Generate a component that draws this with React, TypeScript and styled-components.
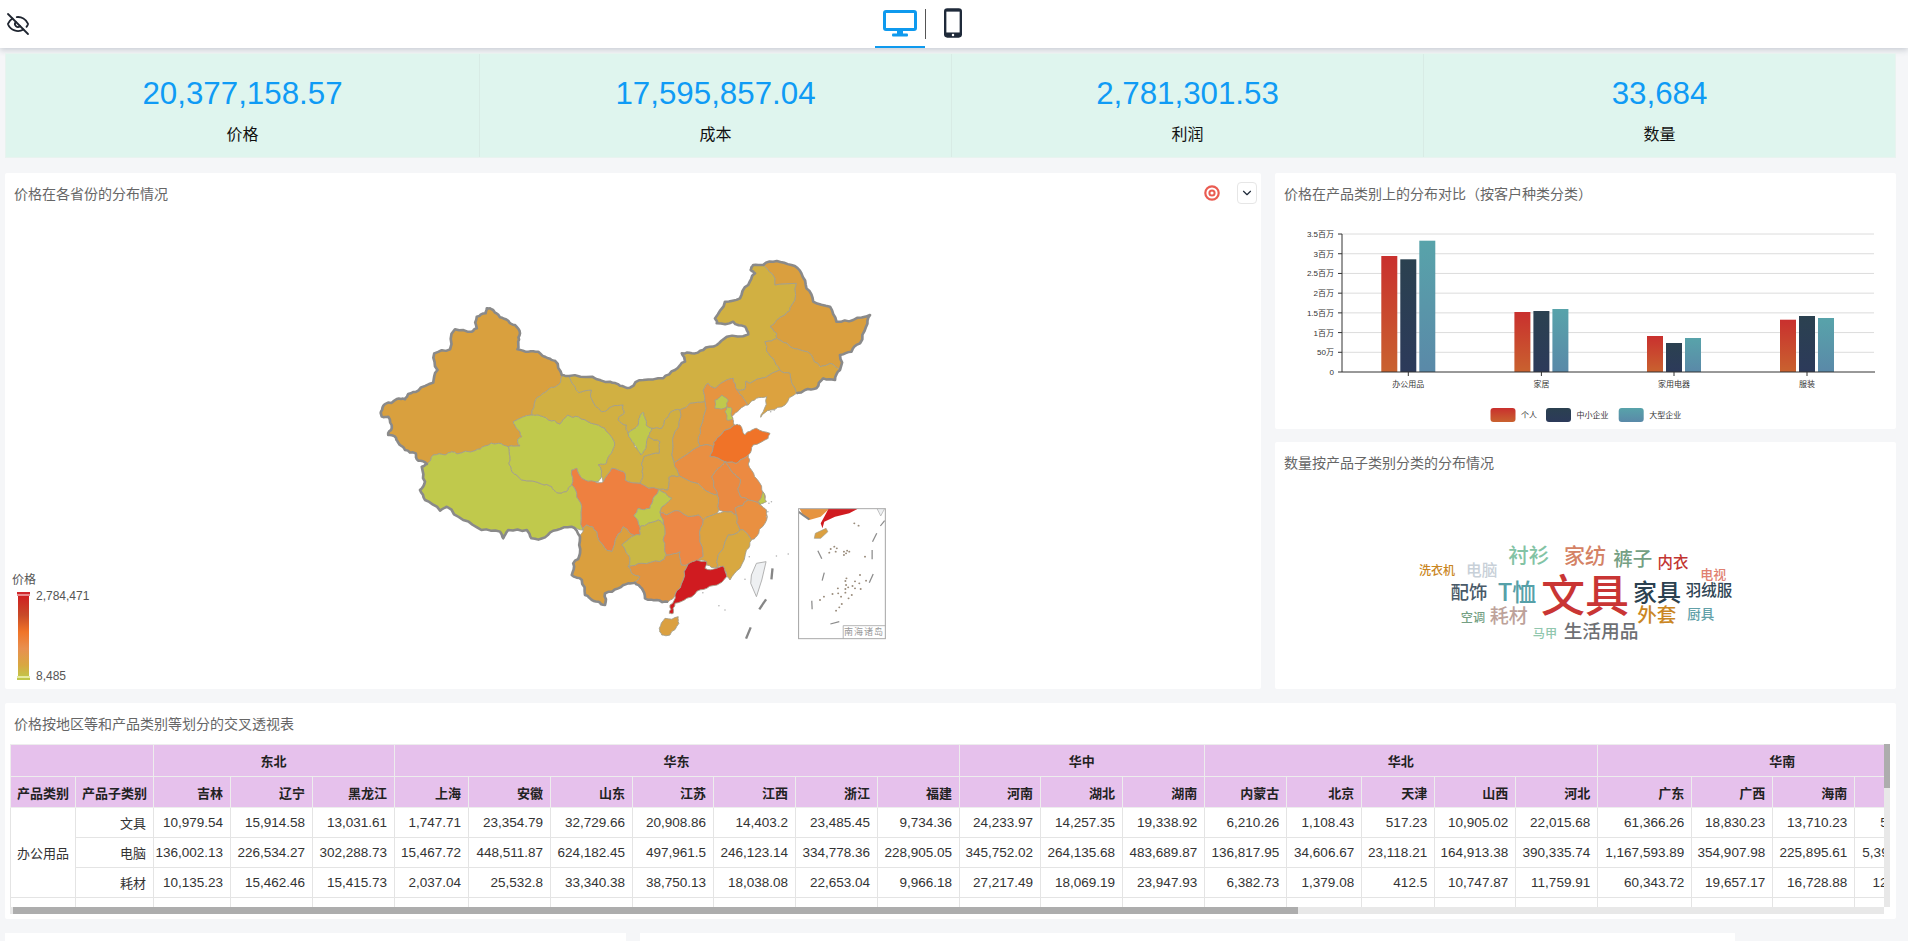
import React from 'react';
import styled, { createGlobalStyle } from 'styled-components';
import { ChevronDown, EyeOff } from 'lucide-react';

const FONT = `"Liberation Sans", "Noto Sans CJK SC", sans-serif`;

const GlobalStyle = createGlobalStyle`
  html, body {
    margin: 0;
    padding: 0;
    background: #f5f6f8;
    font-family: ${FONT};
  }
`;

const Page = styled.div`
  height: 941px;
  overflow: hidden;
  display: flex;
  flex-direction: column;
`;

const Header = styled.header`
  height: 48px;
  flex: none;
  background: #fff;
  box-shadow: 0 2px 6px rgba(60, 70, 90, 0.24);
  display: grid;
  grid-template-columns: 875px 50px 1px 50px;
  align-items: center;
`;

const EyeSlot = styled.div`
  padding-left: 6px;
  display: flex;
  color: #1f2530;
`;

const DeviceTab = styled.div<{ $active?: boolean }>`
  height: 48px;
  box-sizing: border-box;
  padding: ${props => (props.$active ? '0' : '0 0 0 4px')};
  display: flex;
  align-items: center;
  justify-content: center;
  border-bottom: 2px solid ${props => (props.$active ? '#0f9aee' : 'transparent')};
`;

const TabDivider = styled.div`
  width: 1px;
  height: 30px;
  background: #555;
`;

const Content = styled.main`
  padding: 5px 12px 0 5px;
  display: flex;
  flex-direction: column;
  gap: 14px;
`;

const KpiPanel = styled.section`
  height: 105px;
  display: grid;
  grid-template-columns: 473px repeat(3, 1fr);
  background: #dff5ee;
  border: 1px solid #e8f3ef;
  box-sizing: border-box;
  margin-bottom: 1px;
`;

const KpiCell = styled.div`
  display: flex;
  flex-direction: column;
  align-items: center;
  padding-top: 20px;
  border-left: 1px solid #d8ebe5;
  &:first-child {
    border-left: 0;
  }
`;

const KpiValue = styled.div`
  font-size: 31.3px;
  line-height: 40px;
  color: #0f9bf5;
`;

const KpiLabel = styled.div`
  margin-top: 10px;
  font-size: 16px;
  line-height: 22px;
  color: #111;
`;

const ChartsRow = styled.section`
  display: grid;
  grid-template-columns: 1256px 621px;
  column-gap: 14px;
`;

const Card = styled.div`
  background: #fff;
  border-radius: 2px;
  display: flex;
  flex-direction: column;
  position: relative;
`;

const RightColumn = styled.div`
  display: grid;
  grid-template-rows: 256px 247px;
  row-gap: 13px;
`;

const CardHead = styled.div`
  height: 40px;
  flex: none;
  box-sizing: border-box;
  padding: 0 4px 0 9px;
  display: flex;
  align-items: center;
  justify-content: space-between;
`;

const CardTitle = styled.div`
  font-size: 14px;
  color: #666;
  white-space: nowrap;
`;

const CardTools = styled.div`
  display: flex;
  align-items: center;
  gap: 17px;
`;

const DropButton = styled.div`
  width: 20px;
  height: 22px;
  box-sizing: border-box;
  border: 1px solid #e6e6e6;
  border-radius: 4px;
  display: flex;
  align-items: center;
  justify-content: center;
  color: #1f2a3a;
`;

const MapCanvas = styled.div`
  height: 476px;
  position: relative;
`;

const FullSvg = styled.svg`
  display: block;
  width: 100%;
  height: 100%;
`;

const Legend = styled.div`
  position: absolute;
  left: 7px;
  bottom: 6px;
  display: flex;
  flex-direction: column;
  color: #555;
`;

const LegendName = styled.div`
  font-size: 12px;
  line-height: 14px;
  margin-bottom: 7px;
`;

const LegendBody = styled.div`
  display: flex;
  gap: 7px;
  padding-left: 6px;
`;

const LegendBar = styled.div`
  width: 11px;
  height: 84px;
  position: relative;
  background: linear-gradient(#d01b20 0%, #c84a28 25%, #f07428 45%, #e89050 65%, #d8a840 85%, #c0c84a 100%);
  &::before,
  &::after {
    content: '';
    position: absolute;
    left: -1px;
    right: -1px;
    height: 4px;
  }
  &::before {
    top: -2px;
    background: linear-gradient(#d0282c 50%, #e88a8c 50%);
  }
  &::after {
    bottom: -2px;
    background: linear-gradient(#e6eaa0 40%, #c0c84a 40%);
  }
`;

const LegendScale = styled.div`
  height: 94px;
  margin-top: -5px;
  display: flex;
  flex-direction: column;
  justify-content: space-between;
  font-size: 12px;
  line-height: 14px;
`;

const ChartBox = styled.div`
  flex: 1;
  min-height: 0;
`;

const CloudCanvas = styled.div`
  flex: 1;
  position: relative;
`;

const CloudWord = styled.span<{ $x: number; $y: number; $size: number; $color: string }>`
  position: absolute;
  left: ${props => props.$x - 1275}px;
  top: ${props => props.$y - 482}px;
  transform: translate(-50%, -50%);
  font-family: "Noto Sans CJK SC", "Liberation Sans", sans-serif;
  font-size: ${props => props.$size}px;
  font-weight: 500;
  line-height: 1;
  color: ${props => props.$color};
  white-space: nowrap;
`;

const TableCard = styled(Card)`
  height: 216px;
`;

const PivotFrame = styled.div`
  margin-left: 5px;
  width: 1880px;
  display: grid;
  grid-template-columns: 1874px 6px;
  grid-template-rows: 163px 7px;
  margin-top: 1px;
`;

const PivotViewport = styled.div`
  overflow: hidden;
`;

const Pivot = styled.table`
  border-collapse: collapse;
  table-layout: fixed;
  width: 1957px;
  font-size: 13.5px;
  color: #333;
`;

const HeadCell = styled.th<{ $align?: string; $frozen?: boolean; $tail?: boolean }>`
  background: #e6c1ec;
  border: 1px solid #ededed;
  font-size: 13px;
  font-weight: 700;
  color: #222;
  padding: 0 ${props => (props.$tail ? '51px' : '7px')} 0 6px;
  text-align: ${props => props.$align || 'right'};
  white-space: nowrap;
  box-shadow: ${props => (props.$frozen ? '2px 0 3px rgba(0,0,0,0.1)' : 'none')};
  position: relative;
`;

const BodyCell = styled.td<{ $align?: string; $frozen?: boolean; $tail?: boolean }>`
  background: #fff;
  border: 1px solid #e4e4e4;
  padding: 0 ${props => (props.$tail ? '27px' : '7px')} 0 0;
  text-align: ${props => props.$align || 'right'};
  white-space: nowrap;
  box-shadow: ${props => (props.$frozen ? '2px 0 3px rgba(0,0,0,0.1)' : 'none')};
  position: relative;
`;

const CategoryCell = styled(BodyCell)`
  font-size: 13px;
  padding-left: 6px;
`;

const VerticalTrack = styled.div`
  background: #e8e8e8;
`;

const VerticalThumb = styled.div`
  height: 44px;
  background: #adadad;
`;

const HorizontalTrack = styled.div`
  background: #e8e8e8;
  padding-left: 3px;
`;

const HorizontalThumb = styled.div`
  width: 1285px;
  height: 7px;
  background: #adadad;
`;

const BottomRow = styled.section`
  display: grid;
  grid-template-columns: 621px 1095px;
  column-gap: 14px;
`;

const BottomCard = styled.div`
  height: 40px;
  background: #fff;
`;

const IslandLabel = styled.text`
  font-size: 9px;
  letter-spacing: 1px;
  fill: #999;
  text-anchor: middle;
`;

const AxisText = styled.text<{ $anchor?: string }>`
  font-size: 8px;
  fill: #333;
  text-anchor: ${props => props.$anchor || 'middle'};
`;

const kpis = [
  ['20,377,158.57', '价格'],
  ['17,595,857.04', '成本'],
  ['2,781,301.53', '利润'],
  ['33,684', '数量'],
];

// province outlines, traced in the map's own 1568x1260 grid
const provinces: [string, string][] = [
  ['#d9a03e', '565,405 560,430 536,442 513,460 492,478 481,525 429,545 439,565 453,590 441,600 448,618 415,620 387,610 350,618 322,632 271,642 257,635 238,645 205,645 187,672 163,662 156,640 126,630 107,608 98,590 79,585 89,565 79,530 61,530 59,515 70,492 103,477 126,478 135,462 163,452 205,428 217,390 208,340 252,328 266,268 313,275 327,265 327,230 352,220 355,205 364,205 378,218 392,232 415,242 434,255 448,280 443,305 441,328 471,335 499,335 527,355 546,362'],
  ['#c0c94c', '187,672 205,645 238,645 257,635 271,642 322,632 350,618 387,610 415,620 420,650 417,670 425,695 453,720 508,732 537,740 551,758 578,755 593,735 607,760 621,800 625,870 592,860 551,870 518,892 480,895 467,870 415,870 401,895 392,875 340,870 289,840 243,800 224,812 182,780 168,750 182,725 173,680'],
  ['#c0c94c', '429,545 481,525 499,525 527,540 560,552 581,525 611,530 648,550 686,565 704,590 712,620 704,640 690,670 667,675 676,700 667,725 639,725 621,715 607,685 593,690 593,735 578,755 551,758 537,740 508,732 453,720 425,695 417,670 420,650 415,620 448,618 441,600 453,590 439,565'],
  ['#d1b042', '565,405 585,408 600,437 613,458 648,450 648,475 676,515 704,500 737,495 740,520 723,540 746,555 751,580 767,610 786,645 793,635 807,590 840,605 838,640 795,650 790,695 784,730 742,720 737,695 705,685 681,725 676,700 667,675 690,670 704,640 712,620 704,590 686,565 648,550 611,530 581,525 560,552 527,540 499,525 481,525 492,478 513,460 536,442 560,430'],
  ['#d1b042', '585,408 650,410 700,425 728,437 756,443 793,420 849,415 882,390 910,365 901,340 929,340 961,330 999,315 1027,290 1087,283 1078,260 1045,245 999,250 994,235 1022,185 1064,175 1087,135 1106,100 1094,90 1101,75 1129,75 1153,100 1162,135 1222,130 1209,195 1190,225 1148,260 1167,280 1167,295 1134,305 1139,335 1157,355 1176,390 1092,430 1081,423 1075,450 1055,450 1045,415 1027,420 994,445 975,430 961,450 966,485 924,490 896,510 868,518 845,565 817,565 801,555 798,535 793,517 784,530 779,555 751,580 746,555 723,540 740,520 737,495 704,500 676,515 648,475 648,450 613,458 600,437'],
  ['#c0c94c', '793,517 798,535 801,555 817,565 807,590 793,635 786,645 775,625 767,610 751,580 779,555 784,530'],
  ['#d1ae42', '896,510 868,518 845,565 817,565 807,590 840,605 838,640 795,650 790,695 784,730 836,748 862,750 865,712 895,708 880,668 882,575'],
  ['#da9f3e', '1129,75 1167,63 1208,75 1236,100 1250,145 1269,185 1316,200 1334,245 1381,240 1428,225 1417,260 1400,310 1376,335 1344,345 1344,390 1316,370 1288,380 1264,345 1213,325 1176,300 1167,295 1167,280 1148,260 1190,225 1209,195 1222,130 1162,135 1153,100'],
  ['#d9a53f', '1134,305 1167,295 1176,300 1213,325 1264,345 1288,380 1316,370 1344,390 1330,420 1297,415 1278,445 1246,450 1222,460 1204,400 1176,390 1157,355 1139,335'],
  ['#dca23f', '1176,390 1204,400 1222,460 1190,495 1150,510 1122,532 1129,515 1139,470 1110,475 1087,495 1073,475 1055,450 1075,450 1081,423 1092,430'],
  ['#e69440', '961,450 975,430 994,445 1027,420 1045,415 1055,450 1073,475 1087,495 1062,510 1041,530 1048,555 999,595 989,620 952,618 952,565 966,485'],
  ['#c0c94c', '994,480 1013,465 1031,480 1027,500 994,505'],
  ['#c0c94c', '1027,500 1041,505 1045,535 1027,540 1022,515'],
  ['#dba040', '966,485 924,490 896,510 882,575 880,668 952,618 952,565'],
  ['#e98f42', '880,668 952,618 989,620 980,650 1022,665 1010,680 985,710 990,735 1000,765 960,745 895,708'],
  ['#f07328', '1048,555 1064,555 1078,585 1097,570 1110,565 1148,580 1143,595 1101,615 1087,645 1064,660 1050,670 1022,665 980,650 989,620 999,595'],
  ['#ec8a42', '1050,670 1064,660 1087,645 1087,672 1105,710 1125,750 1135,770 1120,795 1087,780 1065,770 1058,745 1065,720 1045,700 1022,665'],
  ['#c0c94c', '1128,755 1138,785 1120,795 1115,785'],
  ['#ea8a42', '985,710 1010,680 1022,665 1045,700 1065,720 1058,745 1065,770 1087,780 1050,805 1055,825 1041,815 1005,810 1000,765 990,735'],
  ['#dea042', '862,750 865,712 895,708 960,745 1000,765 1005,810 999,820 961,840 947,825 910,825 887,812 859,825 840,815 873,775 836,748'],
  ['#ee8040', '593,690 607,685 621,715 658,725 681,725 705,685 737,695 742,720 784,730 836,748 821,775 812,805 779,805 767,828 784,860 784,885 756,880 737,860 719,890 705,935 686,925 663,875 635,855 625,870 621,800 607,760 593,735'],
  ['#c0c94c', '836,748 873,775 840,815 854,865 835,840 807,850 784,860 767,828 779,805 812,805 821,775'],
  ['#da9f3e', '625,870 635,855 663,875 686,925 705,935 719,890 737,860 756,880 784,885 761,890 733,915 752,945 751,980 761,1000 784,1010 770,1028 751,1030 723,1045 686,1060 686,1095 667,1085 644,1075 630,1065 621,1020 593,1005 597,970 616,940 616,890'],
  ['#c9b845', '733,915 761,890 784,885 784,860 807,850 835,840 854,865 849,900 858,945 840,965 789,970 751,980 752,945'],
  ['#e19440', '751,980 789,970 840,965 858,945 896,935 900,975 919,972 905,1020 882,1065 863,1085 831,1080 798,1075 789,1045 770,1028 784,1010 761,1000'],
  ['#ec8845', '859,825 887,812 910,825 947,825 961,840 952,890 961,950 947,962 919,972 900,975 896,935 858,945 849,900 854,865 840,815'],
  ['#dba340', '961,840 999,820 1041,815 1055,825 1064,870 1031,885 999,965 999,985 971,975 966,962 947,962 961,950 952,890'],
  ['#e99041', '1055,825 1050,805 1087,780 1120,795 1138,810 1134,850 1110,890 1096,900 1073,870 1064,870'],
  ['#d8a840', '1064,870 1073,870 1096,900 1082,930 1064,985 1036,1020 1025,995 1008,978 999,985 999,965 1031,885'],
  ['#d01b20', '919,972 943,960 971,965 966,985 999,985 1017,978 1027,1010 1008,1030 971,1045 938,1062 915,1075 882,1090 877,1120 866,1120 868,1095 882,1065 905,1020'],
  ['#dba040', '854,1135 891,1130 893,1150 868,1185 845,1185 838,1165'],
];

const landBorder =
  '1222,460 1246,450 1278,445 1297,415 1330,420 1344,390 1344,345 1376,335 1400,310 1417,260 1428,225 1381,240 1334,245 1316,200 1269,185 1250,145 1236,100 1208,75 1167,63 1129,75 1101,75 1094,90 1106,100 1087,135 1064,175 1022,185 994,235 999,250 1045,245 1078,260 1087,283 1027,290 999,315 961,330 929,340 901,340 910,365 882,390 849,415 793,420 756,443 728,437 700,425 650,410 585,408 565,405 546,362 527,355 499,335 471,335 441,328 443,305 448,280 434,255 415,242 392,232 378,218 364,205 355,205 352,220 327,230 327,265 313,275 266,268 252,328 208,340 217,390 205,428 163,452 135,462 126,478 103,477 70,492 59,515 61,530 79,530 89,565 79,585 98,590 107,608 126,630 156,640 163,662 187,672 173,680 182,725 168,750 182,780 224,812 243,800 289,840 340,870 392,875 401,895 415,870 467,870 480,895 518,892 551,870 592,860 616,890 616,940 597,970 593,1005 621,1020 630,1065 644,1075 667,1085 686,1095 686,1060 723,1045 751,1030 770,1028 789,1045 798,1075 831,1080 863,1085';

// real borders wobble; split each edge with a small offset keyed on its two ends,
// so that neighbouring provinces get the very same wobble on a shared edge
const wobble = (ax: number, ay: number, bx: number, by: number) => {
  const s = Math.sin(ax * 12.9898 + ay * 78.233 + bx * 37.719 + by * 94.673) * 43758.5453;
  return s - Math.floor(s) - 0.5;
};

const roughen = (points: string, closed: boolean) => {
  let pts = points.split(' ').map(p => p.split(',').map(Number));
  for (let pass = 0; pass < 2; pass++) {
    const next: number[][] = [];
    const count = closed ? pts.length : pts.length - 1;
    for (let i = 0; i < count; i++) {
      const p = pts[i];
      const q = pts[(i + 1) % pts.length];
      const [a, b] = p[0] < q[0] || (p[0] === q[0] && p[1] < q[1]) ? [p, q] : [q, p];
      const dx = b[0] - a[0];
      const dy = b[1] - a[1];
      const len = Math.hypot(dx, dy) || 1;
      const off = wobble(a[0], a[1], b[0], b[1]) * Math.min(len * 0.3, 12);
      next.push(p, [(a[0] + b[0]) / 2 - (dy / len) * off, (a[1] + b[1]) / 2 + (dx / len) * off]);
    }
    if (!closed) next.push(pts[pts.length - 1]);
    pts = next;
  }
  return pts.map(p => p.map(v => v.toFixed(1)).join(',')).join(' ');
};

const islandDashes = [
  [1155, 985, 1152, 1018],
  [1137, 1078, 1118, 1108],
  [1094, 1162, 1081, 1196],
];

// little islands along the coast
const coastIslets = [
  [1166, 948], [1199, 942], [1150, 515], [1160, 510], [1145, 790], [1152, 785], [1142, 815],
  [1138, 830], [1090, 950], [1078, 1018], [1005, 1097], [1022, 1110], [960, 1058],
];

// inset (south china sea), same grid
const insetDashes = [
  [1282, 932, 1293, 956],
  [1300, 998, 1294, 1022],
  [1265, 1082, 1266, 1108],
  [1317, 1152, 1342, 1145],
  [1426, 1028, 1437, 1002],
  [1434, 930, 1434, 958],
  [1435, 905, 1447, 880],
  [1457, 858, 1469, 842],
];

const insetDots = [
  [1384, 850], [1396, 857], [1314, 938], [1318, 927], [1328, 920], [1335, 925], [1332, 935],
  [1355, 935], [1364, 932], [1370, 935], [1361, 940], [1355, 945], [1414, 950], [1400, 1005],
  [1417, 1022], [1386, 1024], [1398, 1030], [1362, 1015], [1359, 1023], [1361, 1035], [1367, 1042],
  [1359, 1047], [1379, 1038], [1386, 1045], [1402, 1047], [1338, 1045], [1323, 1062], [1339, 1060],
  [1347, 1070], [1359, 1058], [1377, 1065], [1368, 1075], [1299, 1070], [1288, 1080], [1349, 1092],
  [1342, 1102], [1333, 1112],
];

const barGroups = [
  { name: '办公用品', center: 1408.3, tops: [256, 259.3, 240.7] },
  { name: '家居', center: 1541.4, tops: [312, 311, 309] },
  { name: '家用电器', center: 1674, tops: [336, 343, 338] },
  { name: '服装', center: 1807, tops: [319.7, 316, 318] },
];

const yTicks = ['0', '50万', '1百万', '1.5百万', '2百万', '2.5百万', '3百万', '3.5百万'];

const barSeries = [
  { id: 'barRed', from: '#c9302e', to: '#c9622f', offset: -27 },
  { id: 'barDark', from: '#2b4150', to: '#2c3a5a', offset: -8 },
  { id: 'barTeal', from: '#58a3aa', to: '#5a89a8', offset: 11 },
];

const barLegend = [
  { id: 'barRed', x: 1490.5, label: '个人' },
  { id: 'barDark', x: 1546, label: '中小企业' },
  { id: 'barTeal', x: 1618.7, label: '大型企业' },
];

const cloudWords: [string, number, number, number, string][] = [
  ['文具', 1585, 592.7, 44, '#c93534'],
  ['家具', 1657, 590.7, 24, '#2c4150'],
  ['T恤', 1517, 590.7, 24, '#56a0a8'],
  ['配饰', 1469, 590.7, 18.5, '#4a5a68'],
  ['羽绒服', 1709, 590, 15.5, '#2f4554'],
  ['耗材', 1508.7, 614, 19, '#bda29a'],
  ['外套', 1656.7, 614, 19.5, '#ca8622'],
  ['生活用品', 1601, 630.3, 18.7, '#6e7074'],
  ['衬衫', 1528.7, 554, 20.5, '#83c3a5'],
  ['家纺', 1585, 554.3, 21, '#d48265'],
  ['裤子', 1632.7, 557.7, 19.5, '#749f83'],
  ['内衣', 1673, 562.3, 15.4, '#c23531'],
  ['电视', 1713.3, 573.3, 13, '#e08070'],
  ['洗衣机', 1437, 569.7, 12, '#ca8622'],
  ['电脑', 1481.7, 570, 15.7, '#c8d0d8'],
  ['空调', 1473, 617.3, 12.2, '#749f83'],
  ['厨具', 1700.7, 614, 13.5, '#61a0a8'],
  ['马甲', 1545, 632.7, 12.2, '#91c7ae'],
];

const regions: [string, number][] = [
  ['东北', 3],
  ['华东', 7],
  ['华中', 3],
  ['华北', 5],
  ['华南', 4],
];

const provinceCols: [string, number][] = [
  ['吉林', 77], ['辽宁', 82], ['黑龙江', 82],
  ['上海', 74], ['安徽', 82], ['山东', 82], ['江苏', 81], ['江西', 82], ['浙江', 82], ['福建', 82],
  ['河南', 81], ['湖北', 82], ['湖南', 82],
  ['内蒙古', 82], ['北京', 75], ['天津', 73], ['山西', 81], ['河北', 82],
  ['广东', 94], ['广西', 81], ['海南', 82], ['湖南', 113],
];

const pivotRows: [string, string[]][] = [
  ['文具', ['10,979.54', '15,914.58', '13,031.61', '1,747.71', '23,354.79', '32,729.66', '20,908.86', '14,403.2', '23,485.45', '9,734.36', '24,233.97', '14,257.35', '19,338.92', '6,210.26', '1,108.43', '517.23', '10,905.02', '22,015.68', '61,366.26', '18,830.23', '13,710.23', '58,214.60']],
  ['电脑', ['136,002.13', '226,534.27', '302,288.73', '15,467.72', '448,511.87', '624,182.45', '497,961.5', '246,123.14', '334,778.36', '228,905.05', '345,752.02', '264,135.68', '483,689.87', '136,817.95', '34,606.67', '23,118.21', '164,913.38', '390,335.74', '1,167,593.89', '354,907.98', '225,895.61', '5,390,112.37']],
  ['耗材', ['10,135.23', '15,462.46', '15,415.73', '2,037.04', '25,532.8', '33,340.38', '38,750.13', '18,038.08', '22,653.04', '9,966.18', '27,217.49', '18,069.19', '23,947.93', '6,382.73', '1,379.08', '412.5', '10,747.87', '11,759.91', '60,343.72', '19,657.17', '16,728.88', '123,406.25']],
];

const MonitorIcon = () => (
  <svg width="34" height="27" viewBox="0 0 34 27" fill="none">
    <rect x="1.5" y="1.5" width="31" height="18" rx="1.5" stroke="#0f9aee" strokeWidth="3" />
    <rect x="14" y="20" width="6" height="4" fill="#0f9aee" />
    <rect x="9" y="23.5" width="16" height="3" rx="1" fill="#0f9aee" />
  </svg>
);

const PhoneIcon = () => (
  <svg width="18" height="30" viewBox="0 0 19 31">
    <rect x="0" y="0" width="19" height="31" rx="3.5" fill="#1f2a3a" />
    <rect x="2.5" y="3.5" width="14" height="22" fill="#fff" />
    <circle cx="9.5" cy="28.2" r="1.3" fill="#fff" />
  </svg>
);

const TargetIcon = () => (
  <svg width="16" height="16" viewBox="0 0 16 16" fill="none">
    <circle cx="8" cy="8" r="6.7" stroke="#ea5c52" strokeWidth="2.2" />
    <circle cx="8" cy="8" r="2.6" stroke="#ea5c52" strokeWidth="2" />
  </svg>
);

const ChinaMap = () => (
  <FullSvg viewBox="5 213 1256 476" preserveAspectRatio="none">
    <defs>
      <clipPath id="insetClip">
        <rect x="1228" y="806" width="243" height="390" />
      </clipPath>
    </defs>
    <g transform="translate(360 240) scale(0.35714 0.33333)">
      {provinces.map(([fill, points], i) => (
        <polygon key={i} points={roughen(points, true)} fill={fill} stroke="#a39f8c" strokeWidth="2.6" strokeLinejoin="round" />
      ))}
      <polyline points={roughen(landBorder, false)} fill="none" stroke="#8a8a8a" strokeWidth="7.5" strokeLinejoin="round" />
      <polygon points="1110,970 1137,965 1125,1020 1110,1070 1094,1030 1096,1005" fill="#eef0f2" stroke="#aaa" strokeWidth="2.6" />
      {islandDashes.map(([x1, y1, x2, y2], i) => (
        <line key={i} x1={x1} y1={y1} x2={x2} y2={y2} stroke="#868686" strokeWidth="6.5" />
      ))}
      {coastIslets.map(([cx, cy], i) => (
        <circle key={i} cx={cx} cy={cy} r="2.2" fill="#b0b0b0" />
      ))}
      <g clipPath="url(#insetClip)">
        <polygon points="1228,800 1320,800 1290,830 1258,840 1240,825" fill="#e69440" />
        <polyline points="1228,815 1240,825 1258,838" fill="none" stroke="#868686" strokeWidth="6" />
        <polygon points="1315,800 1405,800 1370,820 1330,830 1300,845 1295,865 1290,850 1300,830" fill="#d01b20" />
        <polygon points="1275,880 1305,865 1310,875 1290,895 1272,895" fill="#dba040" stroke="#a39f8c" strokeWidth="2" />
        <polygon points="1445,800 1472,800 1458,828" fill="#eef0f2" stroke="#aaa" strokeWidth="2" />
        {insetDashes.map(([x1, y1, x2, y2], i) => (
          <line key={i} x1={x1} y1={y1} x2={x2} y2={y2} stroke="#8c8c8c" strokeWidth="3.5" />
        ))}
        {insetDots.map(([cx, cy], i) => (
          <circle key={i} cx={cx} cy={cy} r="2.8" fill="#9a8c7c" />
        ))}
      </g>
      <rect x="1228" y="806" width="243" height="390" fill="none" stroke="#aaa" strokeWidth="3" />
      <polyline points="1353,1196 1353,1157 1471,1157" fill="none" stroke="#aaa" strokeWidth="2.5" />
    </g>
    <IslandLabel x="864" y="635">南海诸岛</IslandLabel>
  </FullSvg>
);

const BarChart = () => {
  const tickY = (k: number) => 372 - k * 19.71;
  return (
    <FullSvg viewBox="1275 213 621 216" preserveAspectRatio="none">
      <defs>
        {barSeries.map(s => (
          <linearGradient key={s.id} id={s.id} x1="0" y1="0" x2="0" y2="1">
            <stop offset="0" stopColor={s.from} />
            <stop offset="1" stopColor={s.to} />
          </linearGradient>
        ))}
      </defs>
      {yTicks.map((label, k) => (
        <g key={label}>
          {k > 0 && <line x1="1342" x2="1874" y1={tickY(k)} y2={tickY(k)} stroke="#dcdcdc" />}
          <line x1="1338" x2="1342" y1={tickY(k)} y2={tickY(k)} stroke="#333" />
          <AxisText $anchor="end" x="1334" y={tickY(k) + 3}>
            {label}
          </AxisText>
        </g>
      ))}
      {barGroups.map(group => (
        <g key={group.name}>
          {barSeries.map((s, i) => (
            <rect
              key={s.id}
              x={group.center + s.offset}
              y={group.tops[i]}
              width="16"
              height={372 - group.tops[i]}
              fill={`url(#${s.id})`}
            />
          ))}
          <line x1={group.center} x2={group.center} y1="372" y2="376" stroke="#333" />
          <AxisText x={group.center} y="387">
            {group.name}
          </AxisText>
        </g>
      ))}
      <line x1="1342" x2="1342" y1="234" y2="372" stroke="#333" />
      <line x1="1342" x2="1875" y1="372" y2="372" stroke="#333" />
      {barLegend.map(item => (
        <g key={item.id}>
          <rect x={item.x} y="408" width="25" height="14" rx="3" fill={`url(#${item.id})`} />
          <AxisText $anchor="start" x={item.x + 30.5} y="418">
            {item.label}
          </AxisText>
        </g>
      ))}
    </FullSvg>
  );
};

const PivotTable = () => (
  <Pivot>
    <colgroup>
      <col style={{ width: 65 }} />
      <col style={{ width: 78 }} />
      {provinceCols.map(([name, width], i) => (
        <col key={i + name} style={{ width }} />
      ))}
    </colgroup>
    <thead>
      <tr style={{ height: 32 }}>
        <HeadCell colSpan={2} $frozen />
        {regions.map(([name, span]) => (
          <HeadCell key={name} colSpan={span} $align="center">
            {name}
          </HeadCell>
        ))}
      </tr>
      <tr style={{ height: 31 }}>
        <HeadCell $align="left">产品类别</HeadCell>
        <HeadCell $frozen>产品子类别</HeadCell>
        {provinceCols.map(([name], i) => (
          <HeadCell key={i + name} $tail={i === provinceCols.length - 1}>
            {name}
          </HeadCell>
        ))}
      </tr>
    </thead>
    <tbody>
      {pivotRows.map(([sub, values], r) => (
        <tr key={sub} style={{ height: 30 }}>
          {r === 0 && (
            <CategoryCell rowSpan={3} $align="left">
              办公用品
            </CategoryCell>
          )}
          <CategoryCell $frozen>{sub}</CategoryCell>
          {values.map((value, i) => (
            <BodyCell key={i} $tail={i === values.length - 1}>
              {value}
            </BodyCell>
          ))}
        </tr>
      ))}
      <tr style={{ height: 30 }}>
        <BodyCell />
        <BodyCell $frozen />
        {provinceCols.map(([name], i) => (
          <BodyCell key={i + name} />
        ))}
      </tr>
    </tbody>
  </Pivot>
);

const App: React.FC = () => (
  <Page>
    <GlobalStyle />
    <Header>
      <EyeSlot>
        <EyeOff size={24} strokeWidth={1.8} />
      </EyeSlot>
      <DeviceTab $active>
        <MonitorIcon />
      </DeviceTab>
      <TabDivider />
      <DeviceTab>
        <PhoneIcon />
      </DeviceTab>
    </Header>
    <Content>
      <KpiPanel>
        {kpis.map(([value, label]) => (
          <KpiCell key={label}>
            <KpiValue>{value}</KpiValue>
            <KpiLabel>{label}</KpiLabel>
          </KpiCell>
        ))}
      </KpiPanel>
      <ChartsRow>
        <Card>
          <CardHead>
            <CardTitle>价格在各省份的分布情况</CardTitle>
            <CardTools>
              <TargetIcon />
              <DropButton>
                <ChevronDown size={14} strokeWidth={2} />
              </DropButton>
            </CardTools>
          </CardHead>
          <MapCanvas>
            <ChinaMap />
            <Legend>
              <LegendName>价格</LegendName>
              <LegendBody>
                <LegendBar />
                <LegendScale>
                  <span>2,784,471</span>
                  <span>8,485</span>
                </LegendScale>
              </LegendBody>
            </Legend>
          </MapCanvas>
        </Card>
        <RightColumn>
          <Card>
            <CardHead>
              <CardTitle>价格在产品类别上的分布对比（按客户种类分类）</CardTitle>
            </CardHead>
            <ChartBox>
              <BarChart />
            </ChartBox>
          </Card>
          <Card>
            <CardHead>
              <CardTitle>数量按产品子类别分类的分布情况</CardTitle>
            </CardHead>
            <CloudCanvas>
              {cloudWords.map(([word, x, y, size, color]) => (
                <CloudWord key={word} $x={x} $y={y} $size={size} $color={color}>
                  {word}
                </CloudWord>
              ))}
            </CloudCanvas>
          </Card>
        </RightColumn>
      </ChartsRow>
      <TableCard>
        <CardHead>
          <CardTitle>价格按地区等和产品类别等划分的交叉透视表</CardTitle>
        </CardHead>
        <PivotFrame>
          <PivotViewport>
            <PivotTable />
          </PivotViewport>
          <VerticalTrack>
            <VerticalThumb />
          </VerticalTrack>
          <HorizontalTrack>
            <HorizontalThumb />
          </HorizontalTrack>
        </PivotFrame>
      </TableCard>
      <BottomRow>
        <BottomCard />
        <BottomCard />
      </BottomRow>
    </Content>
  </Page>
);

export default App;
